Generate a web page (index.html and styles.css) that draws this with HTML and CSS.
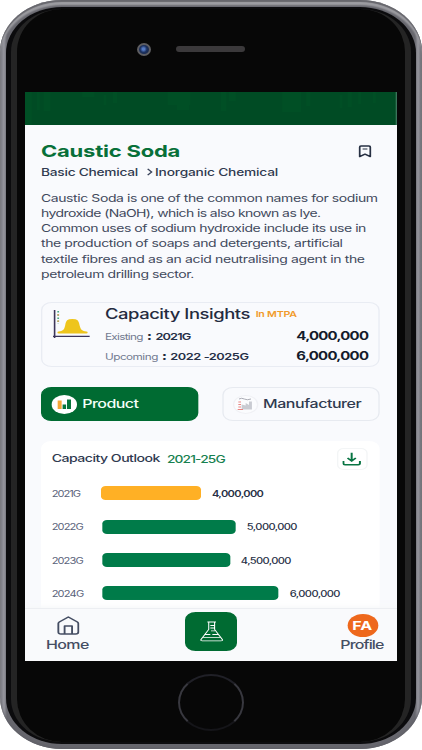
FILE: index.html
```html
<!DOCTYPE html>
<html lang="en">
<head>
<meta charset="utf-8">
<title>Caustic Soda</title>
<link rel="stylesheet" href="styles.css">
</head>
<body>
<div class="phone"><div class="bezel"><div class="glass">
  <div class="top-bezel">
    <span class="camera"></span><span class="speaker"></span>
  </div>
  <div class="viewport"><div class="screen">
    <div class="banner">
      <svg width="279" height="33" viewBox="0 0 279 33" preserveAspectRatio="none"><g fill="#00602a" opacity=".22"><path d="M0 0h5v33H0zM9 0h2v18H9zM14 0h5v19h-5zM43 0h9v5h-9zM59 3h2v10h-2zM66 0h3v11h-3zM107 0h17v13h-17zM114 12h9v6h-9zM147 0h4v19h-4zM153 0h5v9h-5zM193 0h14v20h-14zM211 0h3v14h-3zM236 3h2v13h-2zM242 0h3v15h-3zM250 0h2v12h-2zM261 0h2v11h-2z"/></g></svg>
    </div>
    <main class="content">
      <div class="heading">
        <h1 data-w="104.5">Caustic Soda</h1>
        <svg class="bookmark" width="10" height="13" viewBox="0 0 10 13"><path d="M1 11.6V2.3Q1 1 2 1h6q1 0 1 1.3v9.3L5 9.2z" fill="none" stroke="#273043" stroke-width="1.35" stroke-linejoin="round"/><path d="M3.2 3.9h3.6" stroke="#273043" stroke-width="1"/></svg>
      </div>
      <div class="crumbs">
        <span data-w="73">Basic Chemical</span>
        <svg width="5" height="8" viewBox="0 0 5 8"><path d="M1 .8 4 4 1 7.2" fill="none" stroke="#39435a" stroke-width="1.1"/></svg>
        <span data-w="92.5">Inorganic Chemical</span>
      </div>
      <p class="about">
        <span data-w="252.8">Caustic Soda is one of the common names for sodium</span>
        <span data-w="210">hydroxide (NaOH), which is also known as lye.</span>
        <span data-w="244">Common uses of sodium hydroxide include its use in</span>
        <span data-w="226.5">the production of soaps and detergents, artificial</span>
        <span data-w="243">textile fibres and as an acid neutralising agent in the</span>
        <span data-w="115">petroleum drilling sector.</span>
      </p>
      <section class="insights">
        <svg class="bell" width="28" height="30" viewBox="0 0 28 30"><path d="M1.2 1v28M0 27.3h27.5" fill="none" stroke="#3c3559" stroke-width="1.2"/><path d="M3.9 2v13" stroke="#4aa784" stroke-width="1.3" stroke-dasharray="1.5 1.7"/><path d="M3.9 5.2v9" stroke="#eda04d" stroke-width="1.3" stroke-dasharray="1.2 5.2"/><path d="M4.3 24.600q-1 0-1-1.100t1-1.100C10.500 22.400 8.200 14.500 10.600 11.300Q11.600 10 14.500 10Q17.400 10 18.400 11.300C20.800 14.500 19 22.400 25 22.400q1 0 1 1.100t-1 1.100z" fill="#eec51c"/></svg>
        <div class="insight-body">
          <div class="insight-title"><h2 data-w="109">Capacity Insights</h2><small data-w="31">In MTPA</small></div>
          <div class="insight-row first"><span class="muted" data-w="28.8">Existing</span><b class="colon">:</b><b class="period" data-w="27">2021G</b><strong data-w="54.5">4,000,000</strong></div>
          <div class="insight-row"><span class="muted" data-w="40">Upcoming</span><b class="colon">:</b><b class="period" data-w="59">2022 -2025G</b><strong data-w="54.5">6,000,000</strong></div>
        </div>
      </section>
      <div class="tabs">
        <div class="tab active"><span class="disc"><svg width="11" height="11" viewBox="0 0 11 11"><path d="M.5 1.500h3v8.500h-3z" fill="#f6a736"/><path d="M4.200 5.500h2.600V10H4.200zM7.500.5h3V10h-3z" fill="#08763c"/></svg></span><span data-w="42.500">Product</span></div>
        <div class="tab"><span class="disc outlined"><svg width="12" height="14" viewBox="0 0 12 14"><path d="M1.500 2q2-1.500 4 0t5 0" fill="none" stroke="#999ba5" stroke-width=".7"/><path d="M3.500 12.500v-5l3 1V6l2.500 2V4.500h2.200v8z" fill="#c9cbd2"/><path d="M1 5h2M1 7.500h2M1 10h2M.5 12.500h4" stroke="#e98583" stroke-width="1"/></svg></span><span data-w="74">Manufacturer</span></div>
      </div>
      <section class="outlook">
        <header><h3 data-w="81.5">Capacity Outlook</h3><span class="range" data-w="44">2021-25G</span>
          <span class="download"><svg width="14" height="14" viewBox="0 0 14 14" fill="none" stroke="#087443" stroke-width="1.5"><path d="M7 .8v8M3.900 6 7 9l3.100-3M.8 9v2.500q0 1.200 1.200 1.200h10q1.200 0 1.200-1.200V9"/></svg></span>
        </header>
        <div class="row now"><span class="year" data-w="22">2021G</span><i class="bar b21"></i><span class="val" data-w="39">4,000,000</span></div>
        <div class="row"><span class="year" data-w="24">2022G</span><i class="bar b22"></i><span class="val" data-w="38">5,000,000</span></div>
        <div class="row"><span class="year" data-w="24">2023G</span><i class="bar b23"></i><span class="val" data-w="38">4,500,000</span></div>
        <div class="row"><span class="year" data-w="24.400">2024G</span><i class="bar b24"></i><span class="val" data-w="38">6,000,000</span></div>
      </section>
    </main>
    <nav class="nav">
      <div class="item home"><svg width="17" height="19" viewBox="0 0 17 19" fill="none" stroke="#454e63" stroke-width="1.400" stroke-linejoin="round"><path d="M1 7.500Q1 6.600 1.700 6L8.500 1l6.800 5q.7.600.7 1.500V16q0 2-2 2H3q-2 0-2-2zM5.700 18v-8h5.600v8"/></svg><span data-w="32.500">Home</span></div>
      <div class="lab"><svg width="18" height="21" viewBox="0 0 18 21" fill="none" stroke="#fff" stroke-width=".8"><path d="M5.800 1h6.400M6.800 1v7.500L1 18.500q-.5 1.300 1 1.300h14q1.500 0 1-1.300L11.200 8.500V1M4 13.500h4M9.500 13.500h4.600M2.500 16.300h13M8 4.500h3M8 7h3M8.500 9.800h3"/></svg></div>
      <div class="item profile"><span class="avatar">FA</span><span data-w="33">Profile</span></div>
    </nav>
  </div></div>
  <div class="bottom-bezel"><span class="home-button"></span></div>
</div></div></div>
<script src="fit.js"></script>
</body>
</html>
```

FILE: styles.css
```css
* { box-sizing: border-box; }
body { margin: 0; background: #fff; font-family: Inter, "Open Sans", sans-serif; color: #303a50; overflow: hidden; }
h1, h2, h3, p { margin: 0; }
svg { display: block; flex: none; }
[data-w] { display: block; white-space: nowrap; flex: none; }

.phone { width: 422px; height: 749px; padding: 7px 6px 5px; border-radius: 62px / 52px; background: linear-gradient(90deg, #74747c 0, #96969e 4px, #67676e 7px, #67676e 415px, #96969e 418px, #65656d 100%); box-shadow: inset 0 2px 1px #66666c, inset 0 5px 2px #a0a0a5, inset 0 -2px 2px #626269; }
.bezel { height: 100%; padding: 2px 5px; border-radius: 56px / 46px; background: #0b0b0d; }
.glass { height: 100%; border-radius: 51px / 43px; background: #070707; border: solid #242424; border-width: 0 6px; }
.top-bezel { height: 83px; display: flex; align-items: flex-start; padding: 34px 0 0 120px; }
.camera { width: 14px; height: 13px; border-radius: 50%; border: 2px solid #5e5e62; background: radial-gradient(circle at 45% 45%, #547ac4 0 15%, #1c315f 45%, #17213c 100%); }
.speaker { width: 69px; height: 6px; border-radius: 3px; background: #3b393b; margin: 3px 0 0 25px; }
.viewport { width: 372px; height: 569px; margin-left: 8px; overflow: hidden; }

/* The app is laid out 279px wide and widened to fill the display. */
.screen { width: 279px; height: 569px; transform: scaleX(1.33333); transform-origin: 0 0; background: #f9fafd; display: flex; flex-direction: column; }
.banner { height: 33px; background: #004b24; flex: none; border-right: 1px solid #39755a; }
.content { height: 483px; flex: none; padding: 13px 13.500px 0 12px; overflow: hidden; }
.heading { height: 26px; display: flex; align-items: center; justify-content: space-between; padding-right: 6px; }
.heading h1 { font-size: 16.500px; line-height: 26px; font-weight: 700; color: #087039; }
.crumbs { display: flex; align-items: center; height: 16px; font-size: 10.300px; font-weight: 500; }
.crumbs svg { margin: 0 1.500px 0 6px; }
.about { padding-top: 10.500px; font-size: 10.500px; line-height: 15.300px; color: #41495c; }
.insights { height: 65px; margin-top: 19.500px; border: 1px solid #e9ecf3; border-radius: 8px; display: flex; padding-left: 8px; }
.bell { margin-top: 6px; }
.insight-body { width: 199px; margin-left: 11px; }
.insight-title { display: flex; align-items: center; height: 22px; gap: 4px; }
.insight-title h2 { font-size: 13.800px; font-weight: 500; color: #242b3f; }
.insight-title small { font-size: 8px; font-weight: 600; color: #f19a2b; }
.insight-row { display: flex; align-items: center; height: 18px; font-size: 10px; }
.insight-row.first { height: 22px; }
.muted { font-size: 8.800px; color: #737b91; padding-top: 2px; }
.colon { width: 9px; text-align: center; font-size: 12px; line-height: 12px; color: #20283a; }
.period { font-size: 9.600px; font-weight: 600; color: #263047; padding-top: 2px; }
.insight-row strong { margin-left: auto; margin-right: 1px; font-size: 11.200px; font-weight: 700; color: #141b2b; }
.tabs { display: flex; justify-content: space-between; margin-top: 20px; }
.tab { width: 118px; height: 34px; border: 1px solid #e7eaf0; border-radius: 8px; display: flex; align-items: center; gap: 6px; padding-left: 7px; font-size: 12px; line-height: 16px; padding-top: 1px; font-weight: 500; }
.tab.active { background: #006b32; border-color: #006b32; color: #f4fff9; }
.disc { width: 19px; height: 19px; border-radius: 50%; background: #fff; display: grid; place-items: center; flex: none; }
.tab.active .disc { margin-right: -2px; }
.disc.outlined { border: 1px solid #f0f1f5; background: #fbfcfe; margin-right: -2px; }
.outlook { height: 190px; margin-top: 20px; background: #fff; border-radius: 8px; padding: 0 9px 0 8px; }
.outlook header { display: flex; align-items: center; height: 36px; font-size: 11px; }
.outlook h3 { font-size: 10.600px; font-weight: 500; }
.range { margin-left: 5px; font-size: 10.300px; font-weight: 500; color: #178150; }
.download { margin-left: auto; width: 23px; height: 22px; border: 1px solid #f3f5f6; border-radius: 5px; display: grid; place-items: center; }
.row { display: flex; align-items: center; height: 33.300px; font-size: 8.500px; }
.year { font-size: 8.300px; color: #59627a; padding-top: 1px; }
.bar { height: 14px; border-radius: 3.500px; background: #007b49; }
.b21 { width: 75px; margin-left: 15px; background: #ffb025; }
.b22 { width: 100.500px; margin-left: 13.700px; }
.b23 { width: 96px; margin-left: 13.700px; }
.b24 { width: 132px; margin-left: 14px; }
.val { font-size: 8.300px; margin-left: 8.200px; padding-top: 1px; font-weight: 500; color: #273045; }
.now .val { font-size: 8.300px; font-weight: 600; }
.nav { height: 53px; flex: none; background: #f9fafc; border-top: 1px solid #eceef2; box-shadow: 0 -2px 5px rgba(246,247,249,.9); display: flex; justify-content: space-between; padding: 0 9px 0 15px; position: relative; }
.item { display: flex; flex-direction: column; align-items: center; font-size: 12px; line-height: 16px; font-weight: 500; width: 34px; color: #454e63; }
.home { padding-top: 7px; }
.home svg { margin-bottom: 2px; }
.lab { width: 39px; height: 39px; margin: 3px 0 0 -6px; border-radius: 8px; background: #006b32; display: grid; place-items: center; }
.profile { padding-top: 5px; }
.avatar { width: 23px; height: 23px; border-radius: 50%; background: #ee681c; color: #fff; font-size: 12px; line-height: 23px; font-weight: 700; text-align: center; }
.bottom-bezel { display: flex; justify-content: center; padding-top: 13px; }
.home-button { width: 66px; height: 57px; margin-right: 1px; border-radius: 50%; border: 2px solid #38383f; border-top-color: #202027; border-bottom-color: #151519; }
```

FILE: fit.js
```js
// Spreads each label's letters over its column width.
for (const el of document.querySelectorAll("[data-w]")) {
  const target = parseFloat(el.dataset.w);
  const range = document.createRange();
  range.selectNodeContents(el);
  const natural = range.getBoundingClientRect().width / 1.33333;
  el.style.width = target + "px";
  el.style.letterSpacing = (target - natural) / (el.textContent.length - 1) + "px";
}
```
